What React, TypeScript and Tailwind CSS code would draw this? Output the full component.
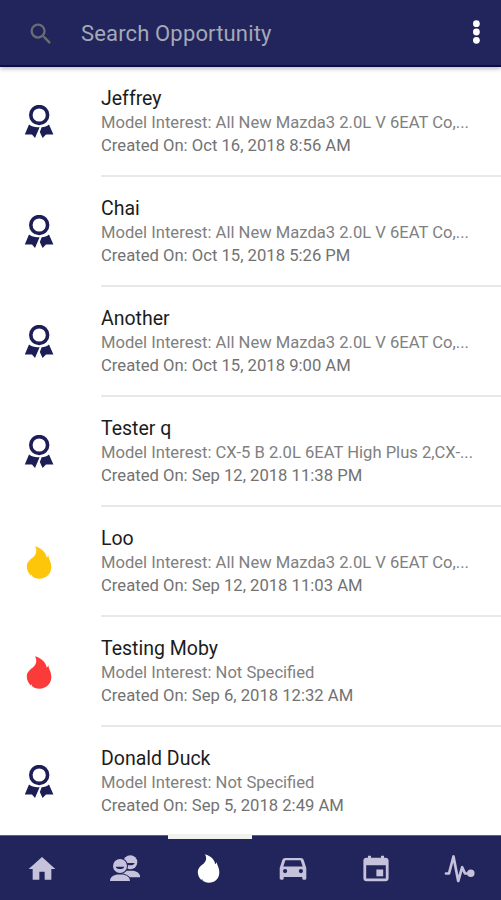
import React from "react";
import { MdHome, MdSearch } from "react-icons/md";

type Kind = "medal" | "warm" | "hot";

const rows: { name: string; model: string; date: string; kind: Kind }[] = [
  { name: "Jeffrey", model: "All New Mazda3 2.0L V 6EAT Co,...", date: "Oct 16, 2018 8:56 AM", kind: "medal" },
  { name: "Chai", model: "All New Mazda3 2.0L V 6EAT Co,...", date: "Oct 15, 2018 5:26 PM", kind: "medal" },
  { name: "Another", model: "All New Mazda3 2.0L V 6EAT Co,...", date: "Oct 15, 2018 9:00 AM", kind: "medal" },
  { name: "Tester q", model: "CX-5 B 2.0L 6EAT High Plus 2,CX-...", date: "Sep 12, 2018 11:38 PM", kind: "medal" },
  { name: "Loo", model: "All New Mazda3 2.0L V 6EAT Co,...", date: "Sep 12, 2018 11:03 AM", kind: "warm" },
  { name: "Testing Moby", model: "Not Specified", date: "Sep 6, 2018 12:32 AM", kind: "hot" },
  { name: "Donald Duck", model: "Not Specified", date: "Sep 5, 2018 2:49 AM", kind: "medal" },
];

function Medal() {
  return (
    <svg width="30" height="34" viewBox="0 0 30 34" className="text-[#1c1e55]">
      <circle cx="15.2" cy="10" r="8.4" fill="none" stroke="currentColor" strokeWidth="3.6" />
      <path d="M5 19.6C8 21.8 11 22.5 15.6 22.2L11 33 8 29.6.8 29.6Z" fill="currentColor" />
      <path d="M25 19.6C22.8 21.4 20.6 22.2 17.7 22.3L15.8 27 18.6 33 22 29.6 29.4 29.6Z" fill="currentColor" />
    </svg>
  );
}

function Flame({ className }: { className: string }) {
  return (
    <svg viewBox="0 0 26 33" className={className} fill="currentColor">
      <path d="M9 .3C15.8 2.2 20.4 7.1 20.6 11.6c.9-.6 1.5-1.3 1.8-2.4C22.6 13 25.3 15.3 25.3 21c0 7-5.2 11.7-12 11.7-3 0-5.5-1-7.3-2.8l-.1-1.6-1.1 1.3C2.2 27.1.8 24 .8 20.3c0-3.8 2.8-6.5 5.7-8.6C10 9.2 11.6 5 9 .3Z" />
    </svg>
  );
}

function People() {
  const person = (
    <>
      <circle cx="10" cy="11" r="7" />
      <path d="M0 26c.3-4.8 4.3-5.8 7-6.5h6c2.7.7 6.7 1.7 7 6.5Z" />
      <path d="M5.7 11.8h8.6c-.4 1.5-2 2.3-4.3 2.3s-3.9-.8-4.3-2.3Z" fill="#22255b" />
    </>
  );
  return (
    <svg width="30" height="28" viewBox="0 0 30 28" fill="currentColor">
      <g transform="translate(10.3 -3.8)">{person}</g>
      <g stroke="#22255b" strokeWidth="2">
        <circle cx="10" cy="11" r="7" />
        <path d="M0 26c.3-4.8 4.3-5.8 7-6.5h6c2.7.7 6.7 1.7 7 6.5Z" />
      </g>
      {person}
    </svg>
  );
}

function Car() {
  return (
    <svg width="28" height="24" viewBox="0 0 28 24" fill="currentColor" fillRule="evenodd">
      <path d="M6.2 1h15.6c1.5 0 2.4.7 2.9 2L27.3 11v10.5c0 .8-.5 1.2-1.2 1.2h-1.6c-.8 0-1.2-.5-1.2-1.2V20H4.7v1.5c0 .7-.4 1.2-1.2 1.2H1.9c-.7 0-1.2-.4-1.2-1.2V11L3.3 3c.5-1.3 1.4-2 2.9-2ZM6.4 3.3 4.3 9.4h19.4l-2.1-6.1ZM6.1 12a2.1 2.1 0 1 0 0 4.2 2.1 2.1 0 0 0 0-4.2Zm15.8 0a2.1 2.1 0 1 0 0 4.2 2.1 2.1 0 0 0 0-4.2Z" />
    </svg>
  );
}

function Calendar() {
  return (
    <svg width="28" height="28" viewBox="0 0 28 28" fill="currentColor" fillRule="evenodd">
      <path d="M6 .8h3v2h10v-2h3v2h1.5c1.9 0 3.1 1.2 3.1 3v17.4c0 1.8-1.2 3-3.1 3h-19c-1.9 0-3.1-1.2-3.1-3V5.8c0-1.8 1.2-3 3.1-3H6Zm-1.8 9.4v13.2h19.6V10.2Z" />
      <rect x="14.4" y="14.5" width="6.8" height="6.8" />
    </svg>
  );
}

function Pulse() {
  return (
    <svg width="32" height="30" viewBox="0 0 32 30" fill="none" stroke="currentColor" strokeWidth="2.7" strokeLinecap="round" strokeLinejoin="round">
      <path d="M2 19.5H5L9.5 2.5 14.2 27 18.2 13.2 21 19.5H25" />
      <circle cx="26.8" cy="19.2" r="2.4" fill="currentColor" />
    </svg>
  );
}

export default function App() {
  return (
    <div className="flex h-[900px] w-[501px] flex-col overflow-hidden bg-white font-['Roboto',sans-serif]">
      <header className="relative z-10 flex h-[67px] shrink-0 items-center border-b-2 border-[#0c0e48] bg-[#22255b] pr-[20px] pl-[27px] shadow-[0_2px_4px_rgba(0,0,0,0.25)]">
        <MdSearch className="mt-[3px] size-[28px] text-[#6b6d72]" />
        <div className="ml-[26px] flex-1 pt-[2px] text-[22px] leading-[28px] tracking-[0.15px] whitespace-nowrap text-[#a5a8b7]">Search Opportunity</div>
        <svg width="9" height="26" viewBox="0 0 9 26" fill="white" className="-mt-px">
          <circle cx="4.4" cy="4.7" r="3.4" />
          <circle cx="4.4" cy="13" r="3.4" />
          <circle cx="4.4" cy="21.3" r="3.4" />
        </svg>
      </header>

      <main className="h-[768px] shrink-0 overflow-hidden">
        {rows.map((r) => (
          <div key={r.name} className="flex h-[110px]">
            <div className="w-[101px] shrink-0 pl-[24px]">
              {r.kind === "medal" ? (
                <div className="pt-[38px]"><Medal /></div>
              ) : (
                <div className="pt-[39px] pl-[2px]">
                  <Flame className={r.kind === "warm" ? "h-[33px] w-[26px] text-[#fdc60b]" : "h-[33px] w-[26px] text-[#fb3a3a]"} />
                </div>
              )}
            </div>
            <div className="h-[110px] flex-1 border-b-2 border-[#e8e8e8] pt-[19px] whitespace-nowrap">
              <div className="text-[19.5px] leading-[26px] text-[#1c1c1c]">{r.name}</div>
              <div className="text-[16.6px] leading-[22px] text-[#808080]">Model Interest: {r.model}</div>
              <div className="pt-px text-[16.65px] leading-[22px] text-[#727272]">Created On: {r.date}</div>
            </div>
          </div>
        ))}
      </main>

      <nav className="relative z-10 grid h-[65px] shrink-0 grid-cols-6 border-t border-[#5c5e86] bg-[#22255b] pt-px text-[#c6c2dc]">
        <div className="flex items-center justify-center"><MdHome className="size-[32px]" /></div>
        <div className="flex items-center justify-center"><People /></div>
        <div className="relative flex items-center justify-center">
          <div className="absolute -top-[3px] left-px h-[5px] w-full bg-[#f1f2ee]" />
          <Flame className="h-[29px] w-[23px] text-white" />
        </div>
        <div className="flex items-center justify-center pl-px"><Car /></div>
        <div className="flex items-center justify-center"><Calendar /></div>
        <div className="flex items-center justify-center pl-px"><Pulse /></div>
      </nav>
    </div>
  );
}
